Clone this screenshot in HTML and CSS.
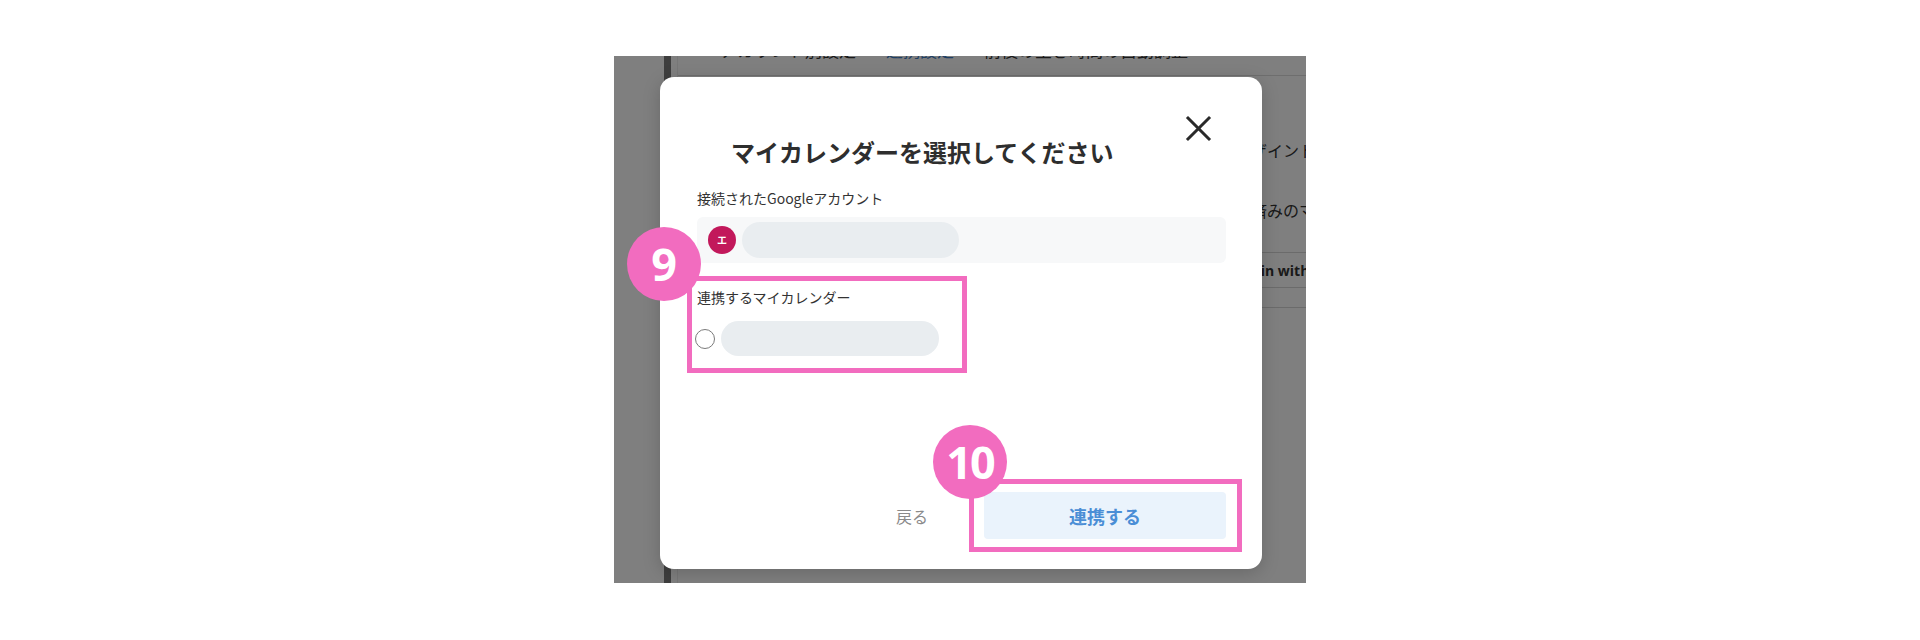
FILE: index.html
```html
<!DOCTYPE html>
<html lang="ja">
<head>
<meta charset="utf-8">
<title>マイカレンダーを選択してください</title>
<link rel="stylesheet" href="styles.css">
</head>
<body>
<div class="page">
  <div class="shot">
    <div class="app">
      <aside class="sidebar"></aside>
      <div class="rail"></div>
      <main class="main">
        <nav class="tabs">
          <span class="tab">アカウント別設定</span>
          <span class="tab tab-active">連携設定</span>
          <span class="tab">前後の空き時間の自動調整</span>
        </nav>
        <section class="rows">
          <div class="row"><span class="row-label"></span><span class="row-value">各デザイントーン</span></div>
          <div class="row"><span class="row-label"></span><span class="row-value">登録済みのマイカレンダー</span></div>
          <div class="row row-line"><span class="row-label"></span><span class="row-value row-strong">Sign in with Google</span></div>
          <div class="row row-thin"></div>
        </section>
      </main>
    </div>

    <div class="overlay"></div>

    <div class="modal">
      <header class="modal-head">
        <h1 class="modal-title">マイカレンダーを選択してください</h1>
        <button class="close" aria-label="閉じる">
          <svg width="27" height="27" viewBox="0 0 27 27"><path d="M3 3 L24 24 M24 3 L3 24" stroke="#2a2a2a" stroke-width="3" stroke-linecap="square" fill="none"/></svg>
        </button>
      </header>

      <p class="field-label label-account">接続されたGoogleアカウント</p>
      <div class="account">
        <span class="avatar">エ</span>
        <span class="pill pill-account"></span>
      </div>

      <p class="field-label label-calendar">連携するマイカレンダー</p>
      <label class="radio-row">
        <span class="radio"></span>
        <span class="pill pill-calendar"></span>
      </label>

      <footer class="modal-foot">
        <button class="btn-back">戻る</button>
        <button class="btn-primary">連携する</button>
      </footer>
    </div>

    <div class="highlight hl-calendar"></div>
    <div class="highlight hl-submit"></div>
    <div class="step step-9">9</div>
    <div class="step step-10">10</div>
  </div>
</div>
</body>
</html>
```

FILE: styles.css
```css
* { box-sizing: border-box; }

html, body {
  margin: 0;
  padding: 0;
  background: #ffffff;
}

body {
  font-family: "Noto Sans CJK JP", "Noto Sans", sans-serif;
  color: #333333;
}

.page {
  padding: 56px 0 0 614px;
}

.shot {
  position: relative;
  width: 692px;
  height: 527px;
  overflow: hidden;
  background: #ffffff;
}

/* ---------- background application ---------- */
.app {
  display: flex;
  height: 100%;
}

.sidebar {
  width: 50px;
  flex: none;
  background: #ffffff;
}

.rail {
  width: 7px;
  flex: none;
  background: #7c7c7c;
}

.main {
  flex: 1;
  margin-left: 6px;
  border-left: 1px solid #eeeeee;
  background: #ffffff;
}

.tabs {
  display: flex;
  align-items: flex-start;
  gap: 30px;
  margin-top: -15px;
  height: 35px;
  padding-left: 42px;
  border-bottom: 1px solid #dcdcdc;
  font-size: 17px;
  line-height: 18px;
  color: #333333;
  white-space: nowrap;
}

.tab-active {
  color: #3f7fc8;
}

.rows {
  padding-top: 44px;
}

.row {
  display: grid;
  grid-template-columns: 541px 1fr;
  align-items: center;
  height: 60px;
  font-size: 16px;
  color: #333333;
  white-space: nowrap;
}

.row-line {
  margin-top: 12px;
  height: 35px;
  border-top: 1px solid #d6d6d6;
}

.row-thin {
  height: 21px;
  border-top: 1px solid #d6d6d6;
  border-bottom: 1px solid #d6d6d6;
}

.row-strong {
  font-family: "Open Sans", "Noto Sans", sans-serif;
  font-weight: 700;
  font-size: 14px;
  margin-left: 9px;
}

.overlay {
  position: absolute;
  inset: 0;
  background: rgba(0, 0, 0, 0.5);
}

/* ---------- modal ---------- */
.modal {
  position: absolute;
  left: 46px;
  top: 21px;
  width: 602px;
  height: 492px;
  display: flex;
  flex-direction: column;
  padding: 37px 36px 30px 37px;
  background: #ffffff;
  border-radius: 14px;
  box-shadow: 0 4px 18px rgba(0, 0, 0, 0.18);
}

.modal-head {
  display: flex;
  align-items: flex-start;
}

.modal-title {
  margin: 20px 0 0 34px;
  font-size: 24px;
  line-height: 36px;
  font-weight: 700;
  color: #2e2e2e;
  letter-spacing: 0;
}

.close {
  margin-left: auto;
  margin-right: 14px;
  width: 27px;
  height: 28px;
  padding: 0;
  border: 0;
  background: transparent;
  display: flex;
  align-items: center;
  justify-content: center;
}

.field-label {
  margin: 0;
  font-size: 14px;
  line-height: 20px;
  color: #333333;
}

.label-account {
  margin-top: 18px;
}

.account {
  display: flex;
  align-items: center;
  gap: 6px;
  margin-top: 9px;
  height: 46px;
  padding-left: 11px;
  background: #f7f8f9;
  border-radius: 6px;
}

.avatar {
  width: 28px;
  height: 28px;
  flex: none;
  border-radius: 50%;
  background: #c2185b;
  color: #ffffff;
  font-size: 10px;
  font-weight: 700;
  line-height: 28px;
  text-align: center;
}

.pill {
  display: block;
  border-radius: 18px;
  background: #e9edf0;
}

.pill-account {
  width: 217px;
  height: 36px;
}

.label-calendar {
  margin-top: 24px;
}

.radio-row {
  display: flex;
  align-items: center;
  gap: 6px;
  margin-top: 14px;
  margin-left: -2px;
  height: 35px;
}

.radio {
  width: 20px;
  height: 20px;
  flex: none;
  border: 1.5px solid #7a7a7a;
  border-radius: 50%;
  background: #ffffff;
}

.pill-calendar {
  width: 218px;
  height: 35px;
}

.modal-foot {
  margin-top: auto;
  display: flex;
  align-items: center;
  justify-content: flex-end;
  gap: 56px;
}

.btn-back {
  padding: 0;
  border: 0;
  background: transparent;
  font-family: inherit;
  font-size: 16px;
  line-height: 24px;
  color: #8a8a8a;
}

.btn-primary {
  width: 242px;
  height: 47px;
  border: 0;
  border-radius: 4px;
  background: #eaf3fc;
  font-family: inherit;
  font-size: 18px;
  font-weight: 700;
  color: #4a8ed6;
}

/* ---------- annotations ---------- */
.highlight {
  position: absolute;
  border: 5px solid #f26cbf;
}

.hl-calendar {
  left: 73px;
  top: 220px;
  width: 280px;
  height: 97px;
}

.hl-submit {
  left: 355px;
  top: 423px;
  width: 273px;
  height: 73px;
}

.step {
  position: absolute;
  width: 74px;
  height: 74px;
  border-radius: 50%;
  background: #f26cbf;
  color: #ffffff;
  font-family: "Noto Sans", "Open Sans", sans-serif;
  font-weight: 700;
  font-size: 45px;
  line-height: 74px;
  text-align: center;
}

.step-9 {
  left: 13px;
  top: 171px;
}

.step-10 {
  left: 319px;
  top: 369px;
  letter-spacing: -2px;
}
```
